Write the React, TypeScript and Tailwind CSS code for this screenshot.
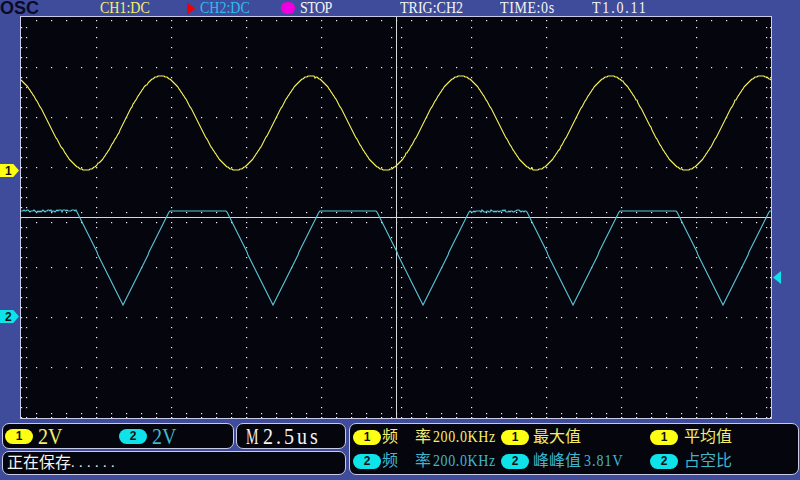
import React from 'react'

const YELLOW = '#f6f25a'
const CYAN = '#58cbdc'

// small repeatable jitter so the traces look sampled, not drawn
const jitter = (x: number, amount: number) => {
  const v = Math.sin(x * 12.9898) * 43758.5453
  return Math.round((v - Math.floor(v)) * amount * 2 - amount)
}

const yellowPoints = () => {
  const pts: string[] = []
  for (let x = 21; x <= 771; x += 1) {
    const y = 123 - 47 * Math.cos(((x - 11) * 2 * Math.PI) / 150)
    pts.push(`${x},${Math.round(y) + (x % 7 === 0 ? jitter(x, 0.6) : 0)}`)
  }
  return pts.join(' ')
}

const cyanPoints = () => {
  const pts: string[] = []
  for (let x = 21; x <= 771; x += 1) {
    // one period runs from trough to trough: 123, 273, 423 ...
    const d = Math.abs(((x - 123 + 75 + 1500) % 150) - 75)
    let y = 305 - d * 2.02
    if (d >= 47) {
      y = 211 + (x < 80 || (x > 470 && x < 528) ? jitter(x, 1) : 0)
    }
    pts.push(`${x},${Math.round(y)}`)
  }
  return pts.join(' ')
}

function Screen() {
  const dots: React.ReactNode[] = []
  const add = (x: number, y: number) => dots.push(<rect key={`${x}-${y}`} x={x} y={y} width={1.2} height={1.2} fill="#f0f0f0" />)

  for (const y of [67, 117, 167, 267, 317, 367]) {
    for (let x = 36; x < 771; x += 15) add(x, y)
  }
  for (const x of [96, 171, 246, 321, 471, 546, 621, 696]) {
    for (let y = 27; y < 418; y += 10) add(x, y)
  }
  // edge ticks
  for (let x = 36; x < 771; x += 15) {
    add(x, 20)
    add(x, 413)
    add(x, 417)
    add(x, 212)
    add(x, 222)
  }
  for (let y = 27; y < 418; y += 10) {
    add(21, y)
    add(26, y)
    add(766, y)
    add(770, y)
    add(391, y)
    add(401, y)
  }

  return (
    <svg viewBox="21 17 750 401" className="block h-[401px] w-[750px]">
      <rect x={21} y={17} width={750} height={401} fill="#05050d" />
      <g>{dots}</g>
      <line x1={21} y1={217.5} x2={771} y2={217.5} stroke="#d8d8d8" strokeWidth={1} />
      <line x1={396.5} y1={17} x2={396.5} y2={418} stroke="#d8d8d8" strokeWidth={1} />
      <polyline points={yellowPoints()} fill="none" stroke={YELLOW} strokeWidth={1.1} />
      <polyline points={cyanPoints()} fill="none" stroke={CYAN} strokeWidth={1.1} />
    </svg>
  )
}

function Pill({ n }: { n: 1 | 2 }) {
  return (
    <span
      className={`flex h-[15px] w-[28px] shrink-0 items-center justify-center rounded-full font-['Liberation_Sans',sans-serif] text-[12px] font-bold text-[#111] ${
        n === 1 ? 'bg-[#ffff14]' : 'bg-[#0fe3ea]'
      }`}
    >
      {n}
    </span>
  )
}

function Marker({ n }: { n: 1 | 2 }) {
  return (
    <div
      className={`flex h-[13px] w-[19px] items-center pl-[5px] font-['Liberation_Sans',sans-serif] text-[12px] font-bold text-[#111] [clip-path:polygon(0_0,70%_0,100%_50%,70%_100%,0_100%)] ${
        n === 1 ? 'bg-[#ffff14]' : 'bg-[#0fe3ea]'
      }`}
    >
      {n}
    </div>
  )
}

function MeasureRow({ n, peak, right }: { n: 1 | 2; peak: string; right: string }) {
  const color = n === 1 ? 'text-[#f5ee6a]' : 'text-[#3fb6cc]'
  return (
    <div className={`flex h-[24px] items-center ${color}`}>
      <Pill n={n} />
      <span className="ml-[1px] w-[33px] text-[16px]">频</span>
      <span className="w-[18px] text-[16px]">率</span>
      <span className="w-[68px] origin-left scale-y-[1.2] tracking-[0.6px]">200.0KHz</span>
      <Pill n={n} />
      <span className="ml-[4px] w-[48px] text-[16px]">{peak}</span>
      <span className="ml-[3px] w-[66px] origin-left scale-y-[1.2] tracking-[1px]">{n === 2 ? '3.81V' : ''}</span>
      <Pill n={n} />
      <span className="ml-[6px] text-[16px]">{right}</span>
    </div>
  )
}

export default function App() {
  return (
    <div className="flex h-[480px] w-[800px] flex-col overflow-hidden bg-[#3e4c9b] font-['Liberation_Serif','Noto_Sans_CJK_SC',serif] text-[14px] leading-none">
      {/* Top status bar */}
      <div className="flex h-[16px] items-center">
        <span className="w-[100px] pt-[1px] font-['Liberation_Sans',sans-serif] text-[18px] font-bold leading-[15px] text-[#0a0a28]">OSC</span>
        <span className="w-[87px] scale-y-[1.14] text-[#f5f06a]">CH1:DC</span>
        <svg viewBox="0 0 8 13" className="h-[13px] w-[8px]">
          <polygon points="0,0 8,6.5 0,13" fill="#f00000" />
        </svg>
        <span className="ml-[5px] w-[81px] scale-y-[1.14] text-[#2fbdf0]">CH2:DC</span>
        <span className="h-[12px] w-[14px] rounded-full bg-[#f000e0]" />
        <span className="ml-[5px] w-[100px] scale-y-[1.14] tracking-[-0.6px] text-[#f4f4f4]">STOP</span>
        <span className="w-[100px] scale-y-[1.14] text-[#f4f4f4]">TRIG:CH2</span>
        <span className="w-[92px] scale-y-[1.14] tracking-[0.6px] text-[#f4f4f4]">TIME:0s</span>
        <span className="scale-y-[1.14] tracking-[1.8px] text-[#f4f4f4]">T1.0.11</span>
      </div>

      {/* Screen with channel markers on both sides */}
      <div className="flex h-[403px]">
        <div className="flex w-[20px] flex-col">
          <div className="mt-[148px]"><Marker n={1} /></div>
          <div className="mt-[133px]"><Marker n={2} /></div>
        </div>
        <div className="border border-[#c9cbe6]">
          <Screen />
        </div>
        <div className="ml-[1px] pt-[255px]">
          <svg viewBox="0 0 8 13" className="h-[13px] w-[8px]">
            <polygon points="8,0 0,6.5 8,13" fill="#0fe3ea" />
          </svg>
        </div>
      </div>

      {/* Bottom readouts */}
      <div className="mt-[4px] flex gap-[3px] pl-[2px]">
        <div className="flex w-[344px] flex-col gap-[2px]">
          <div className="flex gap-[2px]">
            <div className="flex h-[26px] w-[232px] items-center rounded-[7px] border border-[#c9cbe6] bg-[#05050d] pl-[2px] text-[20px]">
              <Pill n={1} />
              <span className="ml-[5px] w-[81px] scale-y-[1.2] text-[#f5ee6a]">2V</span>
              <Pill n={2} />
              <span className="ml-[5px] scale-y-[1.2] text-[#3fb6cc]">2V</span>
            </div>
            <div className="flex h-[26px] w-[110px] items-center rounded-[7px] border border-[#c9cbe6] bg-[#05050d] pl-[9px] text-[20px] text-[#f4f4f4]">
              <span className="w-[17px] origin-left scale-x-[0.7] scale-y-[1.2]">M</span>
              <span className="scale-y-[1.2] tracking-[3px]">2.5us</span>
            </div>
          </div>
          <div className="flex h-[24px] items-center rounded-[7px] border border-[#c9cbe6] bg-[#05050d] pl-[4px] text-[#f4f4f4]">
            <span className="text-[16px]">正在保存</span>
            <span className="tracking-[4.5px]">......</span>
          </div>
        </div>
        <div className="flex h-[52px] w-[450px] flex-col justify-center rounded-[7px] border border-[#c9cbe6] bg-[#05050d] pl-[3px]">
          <MeasureRow n={1} peak="最大值" right="平均值" />
          <MeasureRow n={2} peak="峰峰值" right="占空比" />
        </div>
      </div>
    </div>
  )
}
